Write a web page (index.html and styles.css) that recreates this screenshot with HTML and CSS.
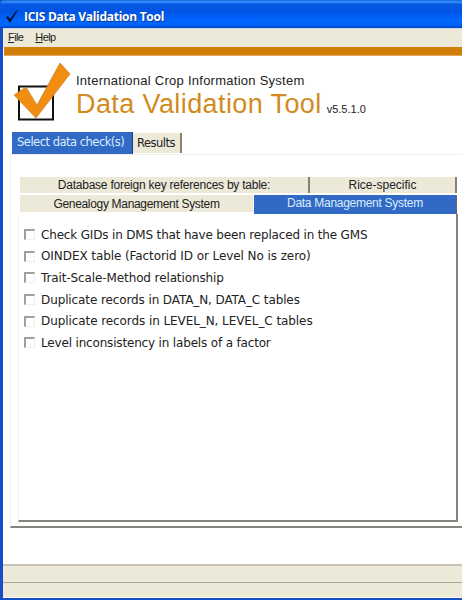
FILE: index.html
```html
<!DOCTYPE html>
<html lang="en">
<head>
<meta charset="utf-8">
<title>ICIS Data Validation Tool</title>
<link rel="stylesheet" href="styles.css">
</head>
<body>
<div class="window">
  <header class="titlebar">
    <svg class="tick" width="12" height="13" viewBox="0 0 12 13"><path d="M0 7 2 6 4 9 10 1 12 0 4 13Z" fill="#001238"/></svg>
    <span>ICIS Data Validation Tool</span>
  </header>
  <div class="frame">
    <nav class="menu"><span class="file"><u>F</u>ile</span><span><u>H</u>elp</span></nav>
    <div class="stripe"></div>
    <main>
      <div class="brand">
        <svg class="logo" width="58" height="60" viewBox="0 0 58 60">
          <rect x="5" y="24.5" width="34" height="33" fill="#fff" stroke="#111" stroke-width="2"/>
          <path d="M0 33 12 25 23 43 46 1 56 12 22 56Z" fill="#f18e12" stroke="#bd751d" stroke-width=".6"/>
        </svg>
        <div class="names">
          <div class="system">International Crop Information System</div>
          <div class="product"><span class="name">Data Validation Tool</span><span class="version">v5.5.1.0</span></div>
        </div>
      </div>
      <div class="tabs"><div class="tab active"><span>Select data check(s)</span></div><div class="tab results"><span>Results</span></div></div>
      <section class="panel">
        <div class="subtabs top"><div><span class="t-db">Database foreign key references by table:</span></div><div><span class="t-rice">Rice-specific</span></div></div>
        <div class="subtabs bottom"><div><span class="t-gen">Genealogy Management System</span></div><div class="selected"><span class="t-data">Data Management System</span></div></div>
        <div class="checks">
          <div class="check"><i></i><span class="c1">Check GIDs in DMS that have been replaced in the GMS</span></div>
          <div class="check"><i></i><span class="c2">OINDEX table (Factorid ID or Level No is zero)</span></div>
          <div class="check"><i></i><span class="c3">Trait-Scale-Method relationship</span></div>
          <div class="check"><i></i><span class="c4">Duplicate records in DATA_N, DATA_C tables</span></div>
          <div class="check"><i></i><span class="c5">Duplicate records in LEVEL_N, LEVEL_C tables</span></div>
          <div class="check"><i></i><span class="c6">Level inconsistency in labels of a factor</span></div>
        </div>
      </section>
    </main>
    <footer><div></div><div></div></footer>
  </div>
</div>
</body>
</html>
```
FILE: styles.css
```css
* { box-sizing: border-box; }
body { margin: 0; background: #fff; font-family: "Liberation Sans", Arial, sans-serif; color: #222; }
.window { width: 462px; height: 600px; overflow: hidden; display: flex; flex-direction: column; background: #164ec5; }
.titlebar { height: 28px; flex: none; display: flex; align-items: center; gap: 6px; padding: 5px 0 0 6px; border-top-left-radius: 5px; background: linear-gradient(#1265d8 0, #3992ff 2px, #0759e4 4px, #0054e3 12px, #0066ff 20px, #0064fb 25px, #0041bd 28px); color: #fff; font: bold 12px/20px "Open Sans", sans-serif; letter-spacing: -.28px; white-space: nowrap; text-shadow: 1px 1px #123a88; }
.frame { flex: 1; display: flex; flex-direction: column; margin: 0 0 2px 3px; background: #fff; }
.menu { height: 19px; flex: none; background: #ece9d8; border-top: 1px solid #c9d6ec; display: flex; gap: 12px; padding-left: 5px; font: 11px/16px "Liberation Sans", sans-serif; letter-spacing: -.6px; }
.menu u { text-underline-offset: 1px; }
.stripe { height: 9px; flex: none; margin-left: 1px; background: #d07f09; border-bottom: 1px solid #dfa964; }
main { flex: 1; display: flex; flex-direction: column; }
.brand { height: 76px; display: flex; padding: 6px 0 0 11px; }
.names { padding: 11px 0 0 4px; white-space: nowrap; }
.system { font-size: 13px; line-height: 16px; letter-spacing: .26px; }
.product { display: flex; align-items: baseline; gap: 5px; line-height: 31px; }
.name { font-size: 27px; color: #d28b1c; letter-spacing: .4px; }
.version { font-size: 11px; }
.tabs { height: 22px; display: flex; margin-left: 9px; font: 11.5px/20px "DejaVu Sans", sans-serif; letter-spacing: -.5px; white-space: nowrap; }
.active { width: 121px; padding-left: 5px; background: #316ac5; color: #dcecff; border-right: 1px solid #173e81; }
.results { width: 49px; height: 20px; margin-top: 1px; padding-left: 4px; line-height: 21px; background: #ece9d8; border-right: 2px solid #888577; }
.panel { height: 374px; margin-left: 7px; padding: 22px 3px 0 7px; border-left: 1px solid #f0efe9; border-top: 1px solid #f0efe9; border-bottom: 2px solid #85847f; display: flex; flex-direction: column; }
.subtabs { display: grid; white-space: nowrap; text-align: center; font-size: 12px; }
.subtabs > div { background: #ece9d8; }
.top { grid-template-columns: 290px 147px; height: 16px; margin-left: 2px; line-height: 17px; }
.top > div { border-right: 2px solid #858276; }
.t-db { letter-spacing: -.24px; }
.t-gen { letter-spacing: -.32px; }
.t-data { letter-spacing: -.28px; }
.bottom { grid-template-columns: 234px 203px; height: 21px; line-height: 19px; margin-left: 2px; border-top: 2px solid #fff; }
.bottom > div:first-child { height: 17px; border-right: 1px solid #fff; }
.bottom .selected { color: #dcecff; background: #316ac5; border-right: 1px solid #666; line-height: 16px; }
.checks { flex: 1; width: 440px; margin-bottom: 4px; padding: 10px 0 0 5px; border-left: 1px solid #f0efe9; border-right: 2px solid #85847f; border-bottom: 2px solid #85847f; }
.check { height: 21.6px; display: flex; align-items: center; gap: 6px; font: 12px/20px "DejaVu Sans", sans-serif; white-space: nowrap; }
.check i { width: 11px; height: 11px; border: 2px solid #a09f9b; border-right: 1px solid #efeee9; border-bottom: 1px solid #efeee9; }
.c1, .c6 { letter-spacing: -.17px; }
.c2, .c5 { letter-spacing: -.08px; }
.c3, .c4 { letter-spacing: -.11px; }
footer { height: 34px; flex: none; background: #ece9d8; border-top: 2px solid #c7c5b9; border-bottom: 1px solid #fff; }
footer div:first-child { height: 17px; border-bottom: 1px solid #aaa89e; }
```
